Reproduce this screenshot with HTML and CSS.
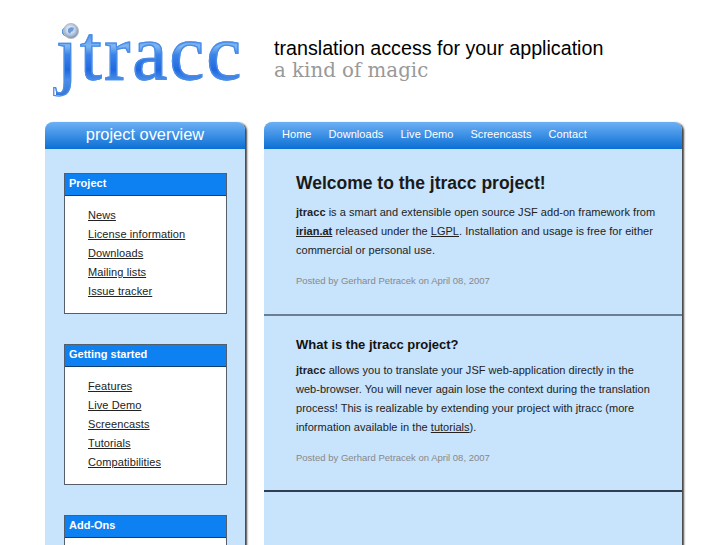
FILE: index.html
```html
<!DOCTYPE html>
<html lang="en">
<head>
  <meta charset="UTF-8">
  <meta name="viewport" content="width=device-width, initial-scale=1.0">
  <title>jtracc</title>
  <link rel="stylesheet" href="styles.css">
</head>
<body>

  <div class="header">
    <div class="logo">
      <span class="logo-text">jtracc</span>
      <svg class="logo-globe" width="16" height="16" viewBox="0 0 16 16">
        <defs>
          <radialGradient id="globe" cx="0.45" cy="0.4" r="0.6">
            <stop offset="0" stop-color="#ffffff"/>
            <stop offset="0.6" stop-color="#b4c8e4"/>
            <stop offset="1" stop-color="#7a8ba3"/>
          </radialGradient>
        </defs>
        <circle cx="8" cy="8" r="7.5" fill="url(#globe)" stroke="#b9bcc2"/>
        <path d="M5 6c2-2 4-2 6-1l-1 3-2 1-1 2-2-2z" fill="#6f9ad4"/>
      </svg>
    </div>
    <div class="slogan">
      <div class="slogan-main">translation access for your application</div>
      <div class="slogan-sub">a kind of magic</div>
    </div>
  </div>

  <div class="columns">
    <div class="sidebar">
      <div class="sidebar-title">project overview</div>
      <div class="sidebar-body">
        <div class="menu-box">
          <div class="menu-title">Project</div>
          <ul class="menu-list">
            <li><a href="#">News</a></li>
            <li><a href="#">License information</a></li>
            <li><a href="#">Downloads</a></li>
            <li><a href="#">Mailing lists</a></li>
            <li><a href="#">Issue tracker</a></li>
          </ul>
        </div>
        <div class="menu-box">
          <div class="menu-title">Getting started</div>
          <ul class="menu-list">
            <li><a href="#">Features</a></li>
            <li><a href="#">Live Demo</a></li>
            <li><a href="#">Screencasts</a></li>
            <li><a href="#">Tutorials</a></li>
            <li><a href="#">Compatibilities</a></li>
          </ul>
        </div>
        <div class="menu-box">
          <div class="menu-title">Add-Ons</div>
          <ul class="menu-list"></ul>
        </div>
      </div>
    </div>

    <div class="main">
      <div class="nav">
        <a href="#">Home</a>
        <a href="#">Downloads</a>
        <a href="#">Live Demo</a>
        <a href="#">Screencasts</a>
        <a href="#">Contact</a>
      </div>
      <div class="post">
        <h1>Welcome to the jtracc project!</h1>
        <p><b>jtracc</b> is a smart and extensible open source JSF add-on framework from <a href="#"><b>irian.at</b></a> released under the <a href="#">LGPL</a>. Installation and usage is free for either commercial or personal use.</p>
        <div class="posted">Posted by Gerhard Petracek on April 08, 2007</div>
      </div>
      <div class="post post-second">
        <h2>What is the jtracc project?</h2>
        <p><b>jtracc</b> allows you to translate your JSF web-application directly in the web-browser. You will never again lose the context during the translation process! This is realizable by extending your project with jtracc (more information available in the <a href="#">tutorials</a>).</p>
        <div class="posted">Posted by Gerhard Petracek on April 08, 2007</div>
      </div>
    </div>
  </div>

</body>
</html>
```

FILE: styles.css
```css
html, body {
  height: 545px;
  overflow: hidden;
}
body {
  margin: 0;
  background-color: #fff;
  color: #222;
  font-family: "Liberation Sans", Arial, sans-serif;
  font-size: 11px;
}
a {
  color: #222;
}

.header {
  height: 122px;
  display: flex;
  padding-left: 56px;
}
.logo {
  position: relative;
  width: 218px;
}
.logo-text {
  display: block;
  margin-top: 11px;
  font-family: "Liberation Serif", serif;
  font-size: 78px;
  line-height: 84px;
  letter-spacing: 2.4px;
  background: linear-gradient(#4a90ea 25%, #7fb6f2 42%, #3a84e8 52%, #2068e0 70%, #4a8ee8 82%, #3676d4 100%);
  -webkit-background-clip: text;
  background-clip: text;
  color: transparent;
  -webkit-text-stroke: 1.3px #4a8ce6;
}
.logo-globe {
  position: absolute;
  left: 7px;
  top: 23px;
}
.slogan {
  padding-top: 37px;
}
.slogan-main {
  font-size: 19.7px;
  line-height: 22px;
  color: #000;
}
.slogan-sub {
  font-family: "DejaVu Serif", serif;
  font-size: 19.8px;
  line-height: 23px;
  color: #999;
}

.columns {
  display: flex;
  gap: 19px;
  padding-left: 45px;
}

.sidebar {
  width: 200px;
  height: 600px;
  background-color: #c8e3fc;
  border-radius: 8px 8px 0 0;
  box-shadow: 2px 1px 2px #444;
}
.sidebar-title {
  height: 27px;
  line-height: 25px;
  text-align: center;
  color: #fff;
  font-size: 16.4px;
  background: linear-gradient(#6db0f4, #0a6fd4);
  border-radius: 8px 8px 0 0;
}
.sidebar-body {
  padding: 24px 18px 0 19px;
}

.menu-box {
  height: 139px;
  margin-bottom: 30px;
  background-color: #fff;
  border: 1px solid #555f6b;
}
.menu-title {
  height: 21px;
  line-height: 19px;
  padding-left: 4px;
  background-color: #0d80f2;
  border-bottom: 1px solid #0f3f70;
  color: #fff;
  font-weight: bold;
}
.menu-list {
  list-style: none;
  margin: 0;
  padding: 10px 0 0 23px;
  letter-spacing: 0.1px;
}
.menu-list li {
  height: 19px;
  line-height: 19px;
}

.main {
  width: 418px;
  height: 600px;
  background-color: #c8e3fc;
  border-radius: 8px 8px 0 0;
  box-shadow: 2px 1px 2px #444;
}
.nav {
  height: 27px;
  display: flex;
  gap: 17px;
  padding-left: 18px;
  line-height: 25px;
  letter-spacing: 0.05px;
  background: linear-gradient(#6db0f4, #0a6fd4);
  border-radius: 8px 8px 0 0;
}
.nav a {
  color: #fff;
  text-decoration: none;
}

.post {
  box-sizing: border-box;
  height: 167px;
  padding: 24px 24px 0 32px;
  border-bottom: 2px solid #6b7f94;
}
.post-second {
  height: 176px;
  padding-top: 21px;
  border-bottom-color: #2f3f50;
}
h1 {
  margin: 0 0 10px;
  font-size: 17.5px;
  line-height: 20px;
  color: #1a1a1a;
}
h2 {
  margin: 0 0 9px;
  font-size: 13px;
  line-height: 15px;
  color: #111;
}
.post p {
  margin: 0;
  line-height: 19px;
  letter-spacing: 0.03px;
}
.posted {
  margin-top: 15px;
  font-size: 9.5px;
  line-height: 12px;
  color: #888;
}
```
